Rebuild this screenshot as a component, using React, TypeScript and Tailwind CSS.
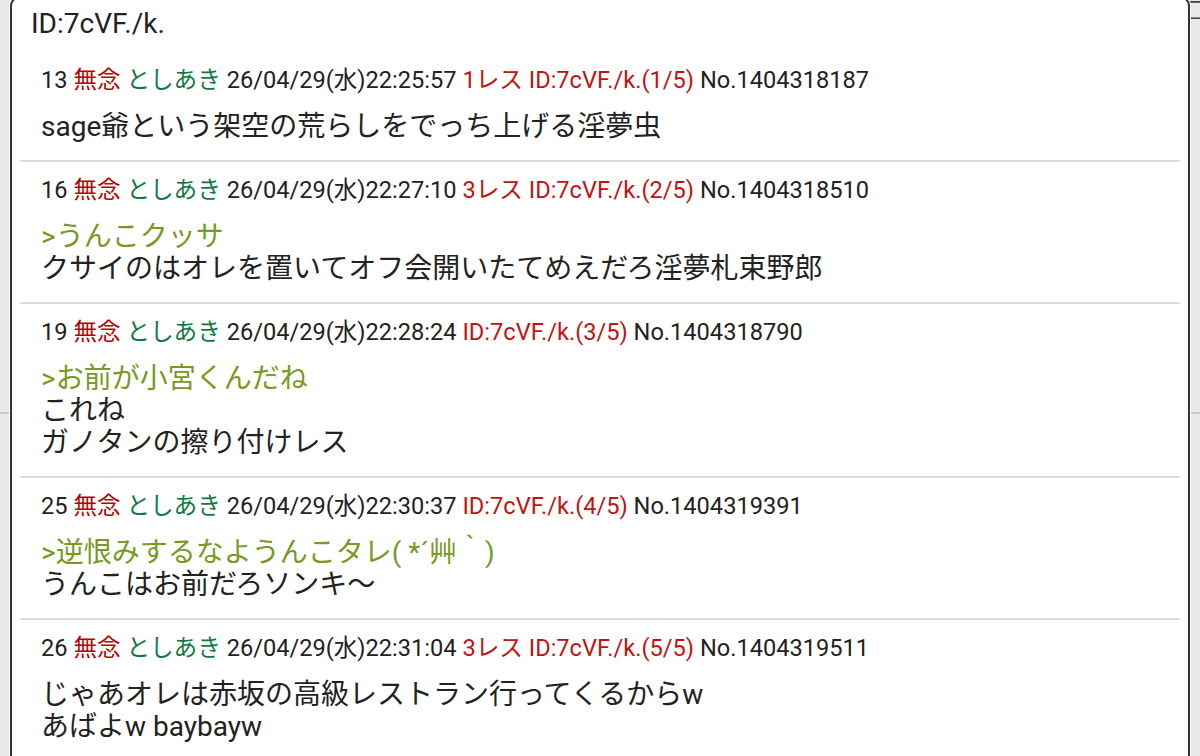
import React from 'react';

type Post = {
  no: number;
  date: string;
  res?: string;
  id: string;
  num: string;
  quote?: string;
  lines: string[];
};

const posts: Post[] = [
  { no: 13, date: '26/04/29(水)22:25:57', res: '1レス', id: 'ID:7cVF./k.(1/5)', num: 'No.1404318187', lines: ['sage爺という架空の荒らしをでっち上げる淫夢虫'] },
  { no: 16, date: '26/04/29(水)22:27:10', res: '3レス', id: 'ID:7cVF./k.(2/5)', num: 'No.1404318510', quote: '>うんこクッサ', lines: ['クサイのはオレを置いてオフ会開いたてめえだろ淫夢札束野郎'] },
  { no: 19, date: '26/04/29(水)22:28:24', id: 'ID:7cVF./k.(3/5)', num: 'No.1404318790', quote: '>お前が小宮くんだね', lines: ['これね', 'ガノタンの擦り付けレス'] },
  { no: 25, date: '26/04/29(水)22:30:37', id: 'ID:7cVF./k.(4/5)', num: 'No.1404319391', quote: '>逆恨みするなようんこタレ( *´艸｀)', lines: ['うんこはお前だろソンキ〜'] },
  { no: 26, date: '26/04/29(水)22:31:04', res: '3レス', id: 'ID:7cVF./k.(5/5)', num: 'No.1404319511', lines: ['じゃあオレは赤坂の高級レストラン行ってくるからw', 'あばよw baybayw'] },
];

function PostRow({ post, first }: { post: Post; first: boolean }) {
  return (
    <div className={`${first ? 'pt-[12px]' : 'pt-[14px] border-t-2 border-[#dcdcdc]'} pb-[17px] px-[21px]`}>
      <div className="text-[23.6px] leading-[28px] text-[#222] whitespace-nowrap">
        {post.no} <span className="text-[#b80000]">無念</span>{' '}
        <span className="text-[#117743]">としあき</span> {post.date}{' '}
        {post.res && <><span className="text-[#c41212]">{post.res}</span>{' '}</>}
        <span className="text-[#c41212]">{post.id}</span> {post.num}
      </div>
      <div className="mt-[17px] text-[28px] leading-[32px] text-[#222]">
        {post.quote && <div className="text-[#789922]">{post.quote}</div>}
        {post.lines.map((l, i) => (
          <div key={i}>{l}</div>
        ))}
      </div>
    </div>
  );
}

export default function App() {
  return (
    <div
      className="w-[1200px] h-[756px] relative overflow-hidden bg-[#e8e8e8]"
      style={{ fontFamily: 'Roboto, "Noto Sans CJK JP", sans-serif' }}
    >
      {/* page underneath the popup */}
      <div className="h-[414px] border-b-2 border-[#cacaca] relative">
        <span className="absolute left-[1183px] top-[-6px] text-[22px] text-[#444]">匚</span>
      </div>

      {/* popup */}
      <div className="absolute left-[10px] right-[10px] top-[-4px] bottom-[-30px] rounded-[10px] border-2 border-[#333] bg-white shadow-[0_0_0_1px_#ffffff]">
        <div className="pt-[10px] pl-[19px] text-[28px] leading-[32px] text-[#222]">ID:7cVF./k.</div>
        <div className="mt-[14px] mx-[8px]">
          {posts.map((p, i) => (
            <PostRow key={p.no} post={p} first={i === 0} />
          ))}
        </div>
      </div>
    </div>
  );
}
